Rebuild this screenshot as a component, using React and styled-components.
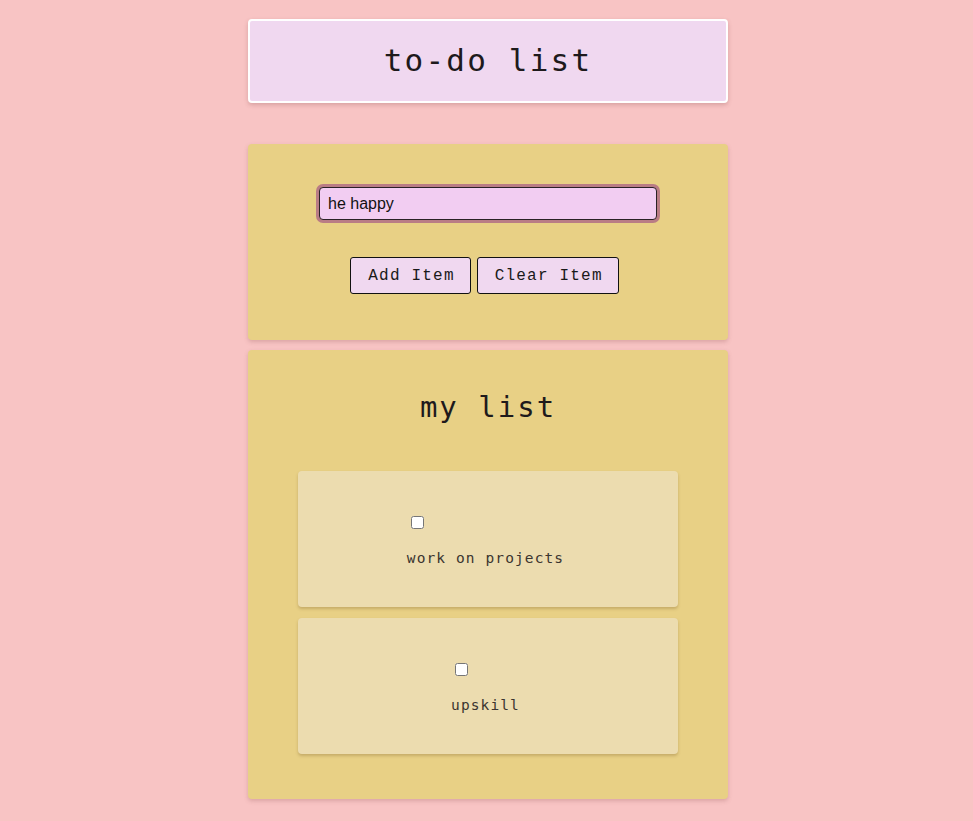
import React, { useState } from "react";
import styled, { createGlobalStyle } from "styled-components";

const Global = createGlobalStyle`
  html, body { margin: 0; padding: 0; background: #f8c4c4; }
  body { font-family: "DejaVu Sans Mono", monospace; }
`;

const Page = styled.div`
  display: flex;
  flex-direction: column;
  align-items: center;
  padding: 19px 0 22px 3px;
`;

const Header = styled.header`
  box-sizing: border-box;
  width: 480px;
  height: 84px;
  padding-bottom: 3px;
  background: #f0d8f0;
  border: 2px solid #ffffff;
  border-radius: 4px;
  box-shadow: 0 2px 4px rgba(120, 60, 60, 0.25);
  display: flex;
  align-items: center;
  justify-content: center;
  margin-bottom: 41px;
`;

const Title = styled.h1`
  margin: 0;
  font-family: "DejaVu Sans Mono", monospace;
  font-weight: normal;
  font-size: 31px;
  letter-spacing: 2.2px;
  color: #1e1a1c;
`;

const Panel = styled.section`
  box-sizing: border-box;
  width: 480px;
  background: #e8d085;
  border-radius: 4px;
  box-shadow: 0 2px 4px rgba(150, 90, 90, 0.3);
  padding: ${(p) => p.$pad};
  display: flex;
  flex-direction: column;
  align-items: center;
  & + & { margin-top: 10px; }
`;

const Input = styled.input`
  box-sizing: border-box;
  width: 338px;
  height: 33px;
  margin: 3px 0;
  padding: 0 8px;
  border: 1px solid #2a2226;
  border-radius: 4px;
  background: #f2cdf2;
  outline: none;
  box-shadow: 0 0 0 3px #b97c85;
  font-family: "Liberation Sans", Arial, sans-serif;
  font-size: 16px;
  color: #111;
`;

const ButtonRow = styled.div`
  display: flex;
  gap: 6px;
  margin-top: 34px;
  padding-right: 7px;
`;

const Button = styled.button`
  box-sizing: border-box;
  height: 37px;
  padding: 0 15px 0 17px;
  background: #f0d8f0;
  border: 1px solid #111;
  border-radius: 3px;
  font-family: "Liberation Mono", "Courier New", monospace;
  font-size: 16px;
  letter-spacing: 1.2px;
  color: #1a1a1a;
  cursor: pointer;
`;

const ListTitle = styled.h2`
  margin: 0 0 44px;
  height: 40px;
  line-height: 40px;
  font-family: "DejaVu Sans Mono", monospace;
  font-weight: normal;
  font-size: 29px;
  letter-spacing: 2px;
  color: #1e1a1c;
`;

const Items = styled.div`
  display: flex;
  flex-direction: column;
  gap: 11px;
  width: 380px;
`;

const Item = styled.div`
  box-sizing: border-box;
  height: 136px;
  padding-top: 42px;
  background: #ecdcaf;
  border-radius: 4px;
  box-shadow: 0 2px 3px rgba(120, 90, 40, 0.3);
  display: flex;
  justify-content: center;
`;

const ItemBody = styled.label`
  display: inline-flex;
  flex-direction: column;
  align-items: flex-start;
  padding-right: 5px;
`;

const Check = styled.input`
  width: 13px;
  height: 13px;
  margin: 3px 3px 3px 4px;
`;

const ItemText = styled.span`
  margin-top: 16px;
  font-family: "DejaVu Sans Mono", monospace;
  font-size: 14.5px;
  line-height: 20px;
  letter-spacing: 1.1px;
  color: #3b3530;
`;

export default function App() {
  const [text, setText] = useState("he happy");
  const items = ["work on projects", "upskill"];
  return (
    <>
      <Global />
      <Page>
        <Header>
          <Title>to-do list</Title>
        </Header>
        <Panel $pad="40px 0 46px">
          <Input autoFocus value={text} onChange={(e) => setText(e.target.value)} />
          <ButtonRow>
            <Button>Add Item</Button>
            <Button>Clear Item</Button>
          </ButtonRow>
        </Panel>
        <Panel $pad="37px 0 45px">
          <ListTitle>my list</ListTitle>
          <Items>
            {items.map((it) => (
              <Item key={it}>
                <ItemBody>
                  <Check type="checkbox" />
                  <ItemText>{it}</ItemText>
                </ItemBody>
              </Item>
            ))}
          </Items>
        </Panel>
      </Page>
    </>
  );
}
